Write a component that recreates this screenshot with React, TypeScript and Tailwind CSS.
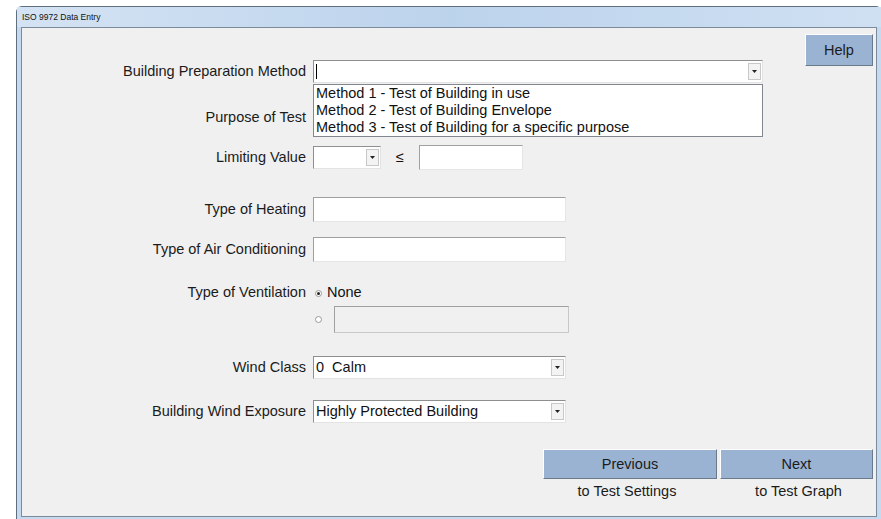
import type { ReactNode } from 'react';

const font = { fontFamily: '"Liberation Sans", Arial, sans-serif' };

function Label({ children }: { children: ReactNode }) {
    return <div className="w-[291px] shrink-0 pr-[7px] text-right text-[14.5px] text-[#1b1b1b]">{children}</div>;
}

function DropArrow() {
    return (
        <div className="my-[2px] mr-[1px] flex w-[13px] shrink-0 items-center justify-center border border-[#c8c8c8] bg-[#f3f3f3]">
            <svg width="5" height="3" viewBox="0 0 5 3">
                <path d="M0 0h5L2.5 3z" fill="#222" />
            </svg>
        </div>
    );
}

function Combo({ width, value, caret }: { width: string; value?: string; caret?: boolean }) {
    return (
        <div
            className={`${width} flex h-full items-stretch border border-t-[#8e8f8f] border-l-[#8e8f8f] border-r-[#e3e3e3] border-b-[#e3e3e3] bg-white`}
        >
            <div className="flex flex-1 items-center whitespace-pre pl-[2px] text-[14.5px] text-[#111]">
                {caret && <span className="mr-[1px] inline-block h-[15px] w-px bg-black" />}
                {value}
            </div>
            <DropArrow />
        </div>
    );
}

function TextBox({ width, disabled }: { width: string; disabled?: boolean }) {
    return (
        <div
            className={`${width} h-full border border-t-[#a0a0a0] border-l-[#a0a0a0] ${
                disabled ? 'border-r-[#c8c8c8] border-b-[#c8c8c8] bg-[#f0f0f0]' : 'border-r-[#e6e6e6] border-b-[#e6e6e6] bg-white'
            }`}
        />
    );
}

function Radio({ checked }: { checked?: boolean }) {
    return (
        <span className="flex h-[7px] w-[7px] items-center justify-center rounded-full border border-[#9a9a9a] bg-white">
            {checked && <span className="h-[3px] w-[3px] rounded-full bg-[#222]" />}
        </span>
    );
}

function NavButton({ title, sub, width, subClass }: { title: string; sub: string; width: string; subClass: string }) {
    return (
        <div className={`${width} flex flex-col items-center`}>
            <button className="flex h-[30px] w-full items-center justify-center border border-t-white border-l-white border-r-[#6b7a8a] border-b-[#6b7a8a] bg-[#9ab3d3] pt-[1px] text-[14.5px] text-[#1b1b1b]">
                {title}
            </button>
            <div className={`mt-[2px] text-[14.5px] text-[#1b1b1b] ${subClass}`}>{sub}</div>
        </div>
    );
}

export default function App() {
    const methods = [
        'Method 1 - Test of Building in use',
        'Method 2 - Test of Building Envelope',
        'Method 3 - Test of Building for a specific purpose',
    ];

    return (
        <div className="h-[519px] w-[881px] overflow-hidden bg-white pl-[16px] pt-[6px]" style={font}>
            {/* window frame */}
            <div className="flex h-[514px] w-[866px] flex-col rounded-t-[6px] border border-[#5f6f80] bg-[#c6daef]">
                <div className="flex h-[20px] items-center bg-gradient-to-r from-[#d4e3f3] via-[#bcd3ec] to-[#cfe0f2] pl-[5px] text-[8.5px] text-[#111]">
                    ISO 9972 Data Entry
                </div>
                <div className="mx-[4px] mb-[2px] flex flex-1 flex-col border border-[#7c8b9b] bg-[#f0f0f0]">
                    <div className="flex pt-[6px]">
                        <div className="mt-[26px] flex flex-col">
                            {/* preparation method with open list */}
                            <div className="relative flex h-[23px] items-center">
                                <Label>Building Preparation Method</Label>
                                <Combo width="w-[450px]" caret />
                                <div className="absolute left-[291px] top-[24px] z-10 w-[450px] border border-[#828790] bg-white pl-[2px] text-[14.5px] leading-[17px] text-[#111]">
                                    {methods.map((m) => (
                                        <div key={m}>{m}</div>
                                    ))}
                                </div>
                            </div>

                            <div className="mt-[23px] flex h-[23px] items-center">
                                <Label>Purpose of Test</Label>
                                <Combo width="w-[450px]" />
                            </div>

                            <div className="mt-[16px] flex h-[25px] items-center">
                                <Label>Limiting Value</Label>
                                <div className="h-[23px]">
                                    <Combo width="w-[68px]" />
                                </div>
                                <span className="ml-[15px] w-[23px] text-[14.5px] text-[#111]">≤</span>
                                <TextBox width="w-[104px]" />
                            </div>

                            <div className="mt-[27px] flex h-[25px] items-center">
                                <Label>Type of Heating</Label>
                                <TextBox width="w-[253px]" />
                            </div>

                            <div className="mt-[15px] flex h-[25px] items-center">
                                <Label>Type of Air Conditioning</Label>
                                <TextBox width="w-[253px]" />
                            </div>

                            <div className="mt-[22px] flex h-[18px] items-center">
                                <Label>Type of Ventilation</Label>
                                <div className="ml-[2px] flex items-center gap-[5px] text-[14.5px] text-[#111]">
                                    <Radio checked />
                                    None
                                </div>
                            </div>

                            <div className="mt-[4px] flex h-[27px] items-center">
                                <div className="w-[291px] shrink-0" />
                                <div className="ml-[2px] mr-[12px]">
                                    <Radio />
                                </div>
                                <TextBox width="w-[235px]" disabled />
                            </div>

                            <div className="mt-[23px] flex h-[23px] items-center">
                                <Label>Wind Class</Label>
                                <Combo width="w-[253px]" value="0  Calm" />
                            </div>

                            <div className="mt-[21px] flex h-[23px] items-center">
                                <Label>Building Wind Exposure</Label>
                                <Combo width="w-[253px]" value="Highly Protected Building" />
                            </div>
                        </div>
                        <div className="flex-1" />
                        <button className="mr-[3px] h-[32px] w-[68px] border border-t-white border-l-white border-r-[#6b7a8a] border-b-[#6b7a8a] bg-[#9ab3d3] pt-[1px] text-[14.5px] text-[#1b1b1b]">
                            Help
                        </button>
                    </div>

                    <div className="mt-[26px] flex justify-end gap-[3px] pr-[3px]">
                        <NavButton title="Previous" sub="to Test Settings" width="w-[174px]" subClass="pr-[6px]" />
                        <NavButton title="Next" sub="to Test Graph" width="w-[153px]" subClass="pl-[4px]" />
                    </div>
                </div>
            </div>
        </div>
    );
}
